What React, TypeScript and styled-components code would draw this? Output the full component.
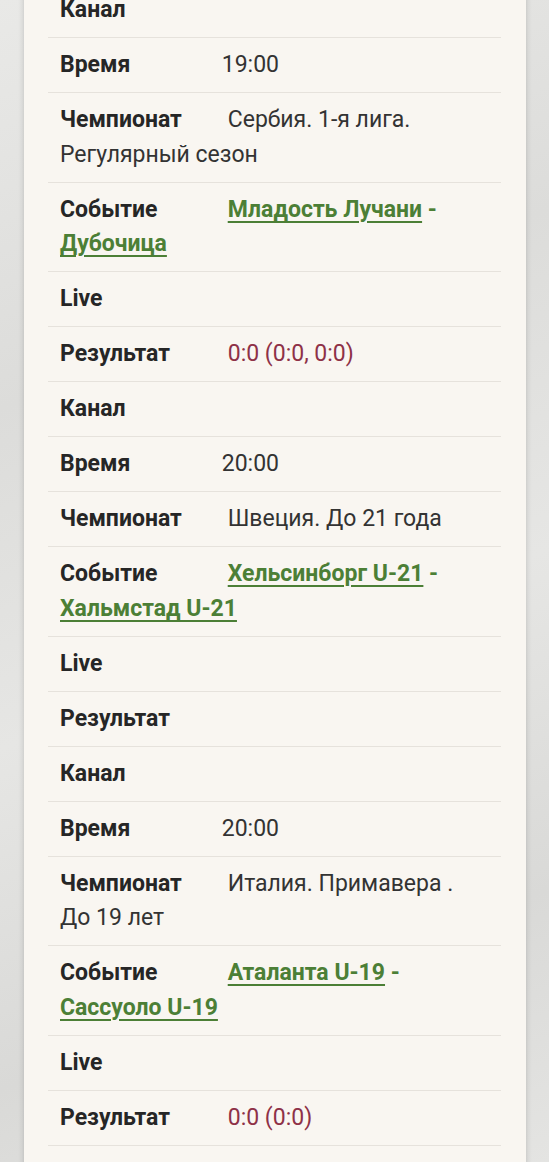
import React from 'react';
import styled, { createGlobalStyle } from 'styled-components';

interface FieldInterface {
  label: string;
  value?: string;
  teams?: [string, string];
  result?: boolean;
  labelWidth?: number;
}

const GlobalStyle = createGlobalStyle`
  html, body {
    margin: 0;
    padding: 0;
    height: 100%;
    overflow: hidden;
  }
  body {
    background: linear-gradient(160deg, #e9e9e7 0%, #dcdcda 30%, #e6e6e4 55%, #d9d9d7 80%, #e4e4e2 100%);
    font-family: Roboto, "Noto Sans", sans-serif;
  }
`;

const Card = styled.div`
  width: 502px;
  margin: -17px 0 0 24px;
  padding: 0 25px 60px 24px;
  box-sizing: border-box;
  background: #f9f6f1;
  box-shadow: 0 0 6px rgba(0, 0, 0, 0.18);
`;

const Row = styled.div`
  padding: 10px 12px 9.5px;
  font-size: 23px;
  line-height: 34.5px;
  color: #333;
  border-bottom: 1px solid #e6e2dc;
`;

const Label = styled.span<{ $width: number }>`
  display: inline-block;
  min-width: ${({ $width }) => $width}px;
  font-weight: 700;
  color: #262626;
`;

const TeamLink = styled.a`
  color: #4c7f36;
  font-weight: 700;
  text-decoration: underline;
  text-decoration-thickness: 2px;
  text-underline-offset: 4px;
`;

const Dash = styled.span`
  color: #4c7f36;
  font-weight: 700;
`;

const Result = styled.span`
  color: #8e3147;
`;

const fields: FieldInterface[] = [
  { label: 'Канал' },
  { label: 'Время', value: '19:00', labelWidth: 156 },
  { label: 'Чемпионат', value: 'Сербия. 1-я лига. Регулярный сезон' },
  { label: 'Событие', teams: ['Младость Лучани', 'Дубочица'] },
  { label: 'Live' },
  { label: 'Результат', value: '0:0 (0:0, 0:0)', result: true },
  { label: 'Канал' },
  { label: 'Время', value: '20:00', labelWidth: 156 },
  { label: 'Чемпионат', value: 'Швеция. До 21 года' },
  { label: 'Событие', teams: ['Хельсинборг U-21', 'Хальмстад U-21'] },
  { label: 'Live' },
  { label: 'Результат' },
  { label: 'Канал' },
  { label: 'Время', value: '20:00', labelWidth: 156 },
  { label: 'Чемпионат', value: 'Италия. Примавера . До 19 лет' },
  { label: 'Событие', teams: ['Аталанта U-19', 'Сассуоло U-19'] },
  { label: 'Live' },
  { label: 'Результат', value: '0:0 (0:0)', result: true }
];

const App: React.FC = () => (
  <>
    <GlobalStyle />
    <Card>
      {fields.map((field, i) => (
        <Row key={i}>
          <Label $width={field.labelWidth || 162}>{field.label}</Label>{' '}
          {field.teams && <>
            <TeamLink href="#">{field.teams[0]}</TeamLink> <Dash>-</Dash>{' '}
            <TeamLink href="#">{field.teams[1]}</TeamLink>
          </>}
          {field.value && (field.result
            ? <Result>{field.value}</Result>
            : <span>{field.value}</span>)}
        </Row>
      ))}
    </Card>
  </>
);

export default App;
